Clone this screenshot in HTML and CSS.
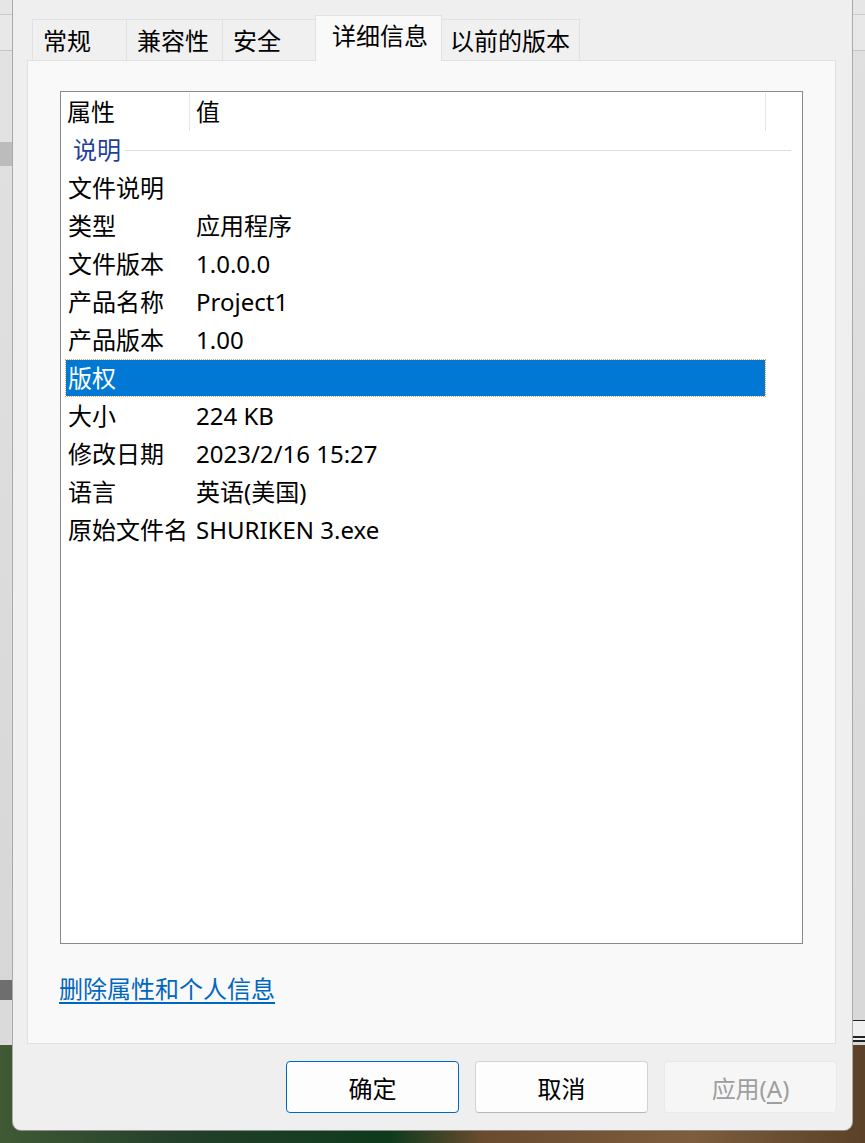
FILE: index.html
```html
<!DOCTYPE html>
<html lang="zh-CN">

<head>
    <meta charset="UTF-8">
    <title>属性</title>
    <link rel="stylesheet" href="styles.css">
</head>

<body>
    <div class="desktop">
        <div class="dialog">
            <div class="tabs">
                <div class="tab t1">常规</div>
                <div class="tab t2">兼容性</div>
                <div class="tab t3">安全</div>
                <div class="tab t4 active">详细信息</div>
                <div class="tab t5">以前的版本</div>
            </div>

            <div class="panel">
                <div class="listbox">
                    <div class="list-head">
                        <div class="hcol hname">属性</div>
                        <div class="hcol hvalue">值</div>
                    </div>

                    <div class="group"><span>说明</span><i></i></div>

                    <div class="row"><span class="name">文件说明</span><span class="value"></span></div>
                    <div class="row"><span class="name">类型</span><span class="value">应用程序</span></div>
                    <div class="row"><span class="name">文件版本</span><span class="value">1.0.0.0</span></div>
                    <div class="row"><span class="name">产品名称</span><span class="value">Project1</span></div>
                    <div class="row"><span class="name">产品版本</span><span class="value">1.00</span></div>
                    <div class="row selected"><span class="name">版权</span><span class="value"></span></div>
                    <div class="row"><span class="name">大小</span><span class="value">224 KB</span></div>
                    <div class="row"><span class="name">修改日期</span><span class="value">2023/2/16 15:27</span></div>
                    <div class="row"><span class="name">语言</span><span class="value">英语(美国)</span></div>
                    <div class="row"><span class="name">原始文件名</span><span class="value">SHURIKEN 3.exe</span></div>
                </div>

                <a href="#" class="link">删除属性和个人信息</a>
            </div>

            <div class="buttons">
                <button class="btn default">确定</button>
                <button class="btn">取消</button>
                <button class="btn disabled">应用(<u>A</u>)</button>
            </div>
        </div>
    </div>
</body>

</html>
```

FILE: styles.css
```css
* {
    box-sizing: border-box;
}

html,
body {
    margin: 0;
    padding: 0;
}

body {
    font-family: "Noto Sans", "Noto Sans CJK SC", sans-serif;
    font-size: 24px;
    color: #000;
    width: 865px;
    height: 1143px;
    overflow: hidden;
    background:
        linear-gradient(to right, #3f5a34 0, #24402a 20%, #0f3a1c 45%, #6b4b2e 56%, #7d5d3d 80%, #5b4128 100%) 0 1045px / 100% 98px no-repeat,
        /* window behind, left side */
        linear-gradient(to bottom, #e6e6e6 0, #e6e6e6 14px, #c9c9c9 14px, #c9c9c9 15px, #e8e8e8 15px, #e8e8e8 50px, #c6c6c6 50px, #c6c6c6 51px, #e2e2e2 51px, #e2e2e2 142px, #bcbcbc 142px, #bcbcbc 166px, #e0e0e0 166px, #d7d7d7 980px, #6e6e6e 980px, #6e6e6e 1000px, #dadada 1000px) 0 0 / 13px 1045px no-repeat,
        /* window behind, right side */
        linear-gradient(to bottom, #e6e6e6 0, #e6e6e6 14px, #c9c9c9 14px, #c9c9c9 15px, #e8e8e8 15px, #e8e8e8 50px, #c6c6c6 50px, #c6c6c6 51px, #e0e0e0 51px, #d8d8d8 1020px, #222 1020px, #222 1021px, #f0f0f0 1021px, #f0f0f0 1036px, #222 1036px, #222 1038px, #f0f0f0 1038px, #f0f0f0 1040px, #222 1040px, #222 1042px, #d8d8d8 1042px) 852px 0 / 13px 1047px no-repeat,
        #dcdcdc;
}

.desktop {
    padding: 0 13px;
}

.dialog {
    width: 839px;
    height: 1130px;
    background-color: #efefef;
    border-radius: 0 0 8px 8px;
    box-shadow: -1px 0 0 #a9a9a9, 1px 0 0 #a9a9a9, 0 1px 0 #8c8c8c;
    display: flex;
    flex-direction: column;
}

/* tabs */

.tabs {
    height: 60px;
    padding-left: 19px;
    display: flex;
    align-items: flex-end;
}

.tab {
    height: 41px;
    border: 1px solid #e1e1e1;
    border-right: none;
    border-bottom: none;
    background-color: #f0f0f0;
    padding-left: 10px;
    padding-top: 2px;
    display: flex;
    align-items: center;
    line-height: 1;
}

.t1 {
    width: 94px;
}

.t2 {
    width: 96px;
}

.t3 {
    width: 95px;
}

.t4 {
    width: 123px;
}

.t5 {
    width: 140px;
    padding-left: 9px;
    border-right: 1px solid #e1e1e1;
}

.tab.active {
    position: relative;
    z-index: 1;
    height: 46px;
    width: 127px;
    margin: 0 -2px -1px;
    padding-left: 16px;
    padding-top: 0;
    padding-bottom: 6px;
    border-right: 1px solid #e1e1e1;
    background-color: #f9f9f9;
}

/* panel */

.panel {
    margin-left: 14px;
    width: 809px;
    height: 984px;
    border: 1px solid #e0e0e0;
    background-color: #f9f9f9;
    padding: 30px 0 0 32px;
}

.listbox {
    width: 743px;
    height: 853px;
    border: 1px solid #878a93;
    background-color: #fff;
}

.list-head {
    display: flex;
    height: 39px;
}

.hcol {
    height: 38px;
    margin-top: 1px;
    line-height: 38px;
    border-right: 1px solid #e5e5e5;
}

.hname {
    width: 129px;
    padding-left: 6px;
}

.hvalue {
    width: 576px;
    padding-left: 6px;
}

.group {
    height: 38px;
    display: flex;
    align-items: center;
    padding: 0 11px 0 12px;
    color: #1f3f9c;
}

.group span {
    line-height: 38px;
}

.group i {
    flex: 1;
    height: 1px;
    margin-left: 4px;
    background-color: #dcdfe8;
}

.row {
    display: flex;
    width: 701px;
    height: 38px;
    margin-left: 4px;
    line-height: 36px;
    border: 1px dotted transparent;
}

.row .name {
    width: 130px;
    padding-left: 2px;
    white-space: nowrap;
}

.row .value {
    flex: 1;
    white-space: nowrap;
}

.row.selected {
    background-color: #0078d4;
    background-clip: padding-box;
    border-color: #e8a05a;
    color: #fff;
}

.link {
    display: inline-block;
    margin-top: 28px;
    margin-left: -1px;
    color: #0067c0;
    text-decoration: underline;
    text-underline-offset: 4px;
    line-height: 34px;
}

/* buttons */

.buttons {
    display: flex;
    justify-content: flex-end;
    gap: 16px;
    padding: 17px 15px 0 0;
}

.btn {
    font-family: "Noto Sans", "Noto Sans CJK SC", sans-serif;
    font-size: 24px;
    width: 173px;
    height: 52px;
    border: 1px solid #d3d3d3;
    border-bottom-color: #b8b8b8;
    border-radius: 4px;
    background-color: #fdfdfd;
    color: #000;
    padding: 0;
}

.btn.default {
    border: 1px solid #0067c0;
}

.btn.disabled {
    border: 1px solid #e9e9e9;
    background-color: #f6f6f6;
    color: #9e9e9e;
}

.btn u {
    text-underline-offset: 4px;
}
```
